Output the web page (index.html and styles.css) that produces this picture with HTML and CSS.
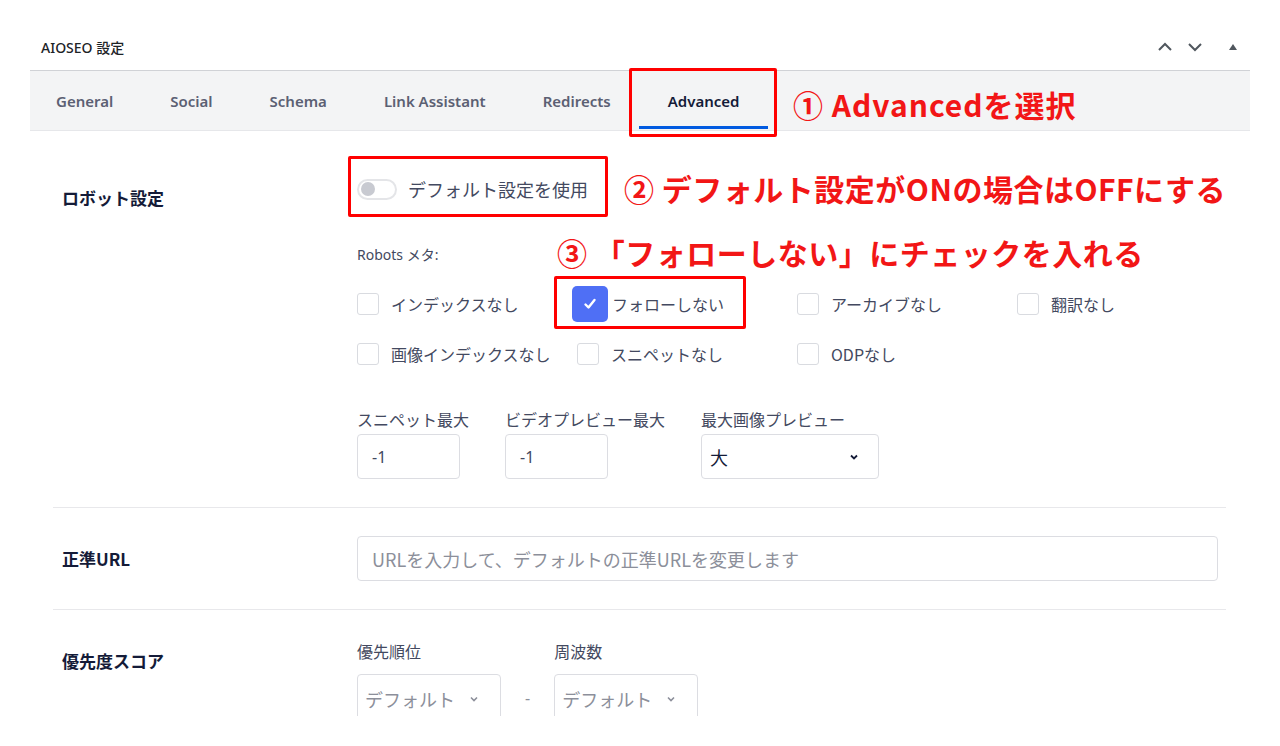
FILE: index.html
```html
<!DOCTYPE html>
<html lang="ja">
<head>
<meta charset="utf-8">
<title>AIOSEO 設定</title>
<link rel="stylesheet" href="styles.css">
</head>
<body>
<div class="page">
  <div class="postbox">
    <div class="postbox-header">
      <h2 class="postbox-title">AIOSEO 設定</h2>
      <div class="handle-actions">
        <svg class="hicon" width="16" height="16" viewBox="0 0 16 16"><path d="M2 11 L8 5 L14 11" fill="none" stroke="#50575e" stroke-width="2"/></svg>
        <svg class="hicon" width="16" height="16" viewBox="0 0 16 16"><path d="M2 5 L8 11 L14 5" fill="none" stroke="#50575e" stroke-width="2"/></svg>
        <svg class="hicon tri" width="10" height="10" viewBox="0 0 10 10"><path d="M1 8 L5 2 L9 8 Z" fill="#50575e"/></svg>
      </div>
    </div>
    <div class="tabs">
      <div class="tab">General</div>
      <div class="tab">Social</div>
      <div class="tab">Schema</div>
      <div class="tab">Link Assistant</div>
      <div class="tab">Redirects</div>
      <div class="tab active">Advanced</div>
    </div>
    <div class="content">
      <div class="setting-row row-robots">
        <div class="setting-label">ロボット設定</div>
        <div class="setting-field">
          <div class="toggle-line">
            <span class="toggle"><span class="knob"></span></span>
            <span class="toggle-text">デフォルト設定を使用</span>
          </div>
          <div class="robots-label">Robots メタ:</div>
          <div class="checks">
            <label class="check"><span class="box"></span><span class="ctext">インデックスなし</span></label>
            <label class="check checked"><span class="box"><svg width="16" height="16" viewBox="0 0 16 16"><path d="M3.5 8.5 L6.5 11.5 L12.5 4" fill="none" stroke="#fff" stroke-width="2.4" stroke-linecap="round" stroke-linejoin="round"/></svg></span><span class="ctext">フォローしない</span></label>
            <label class="check"><span class="box"></span><span class="ctext">アーカイブなし</span></label>
            <label class="check"><span class="box"></span><span class="ctext">翻訳なし</span></label>
            <label class="check"><span class="box"></span><span class="ctext">画像インデックスなし</span></label>
            <label class="check"><span class="box"></span><span class="ctext">スニペットなし</span></label>
            <label class="check"><span class="box"></span><span class="ctext">ODPなし</span></label>
          </div>
          <div class="limits">
            <div class="limit">
              <div class="flabel">スニペット最大</div>
              <div class="input small">-1</div>
            </div>
            <div class="limit">
              <div class="flabel">ビデオプレビュー最大</div>
              <div class="input small">-1</div>
            </div>
            <div class="limit">
              <div class="flabel">最大画像プレビュー</div>
              <div class="input select wide"><span>大</span>
                <svg width="12" height="12" viewBox="0 0 12 12"><path d="M3 4.5 L6 7.5 L9 4.5" fill="none" stroke="#141b38" stroke-width="1.8"/></svg>
              </div>
            </div>
          </div>
        </div>
      </div>
      <div class="setting-row row-url">
        <div class="setting-label">正準URL</div>
        <div class="setting-field">
          <div class="input url"><span class="placeholder">URLを入力して、デフォルトの正準URLを変更します</span></div>
        </div>
      </div>
      <div class="setting-row row-priority">
        <div class="setting-label">優先度スコア</div>
        <div class="setting-field">
          <div class="prio">
            <div class="limit">
              <div class="flabel">優先順位</div>
              <div class="input select prio-select"><span class="placeholder">デフォルト</span>
                <svg width="12" height="12" viewBox="0 0 12 12"><path d="M3 4.5 L6 7.5 L9 4.5" fill="none" stroke="#8c8f9a" stroke-width="1.6"/></svg>
              </div>
            </div>
            <div class="dash">-</div>
            <div class="limit">
              <div class="flabel">周波数</div>
              <div class="input select prio-select"><span class="placeholder">デフォルト</span>
                <svg width="12" height="12" viewBox="0 0 12 12"><path d="M3 4.5 L6 7.5 L9 4.5" fill="none" stroke="#8c8f9a" stroke-width="1.6"/></svg>
              </div>
            </div>
          </div>
        </div>
      </div>
    </div>
  </div>

  <div class="anno-box box1"></div>
  <div class="anno-text text1">① Advancedを選択</div>
  <div class="anno-box box2"></div>
  <div class="anno-text text2">② デフォルト設定がONの場合はOFFにする</div>
  <div class="anno-text text3">③ 「フォローしない」にチェックを入れる</div>
  <div class="anno-box box3"></div>
</div>
</body>
</html>
```
FILE: styles.css
```css
* { box-sizing: border-box; }
html, body { margin: 0; padding: 0; background: #fff; }
body {
  font-family: "Noto Sans", "Noto Sans CJK JP", sans-serif;
  color: #434960;
}
.page {
  position: relative;
  width: 1280px;
  height: 716px;
  overflow: hidden;
}
.postbox {
  margin-left: 30px;
  width: 1220px;
}
.postbox-header {
  height: 70px;
  display: flex;
  align-items: center;
  justify-content: space-between;
  padding: 24px 12px 0 11px;
}
.postbox-title {
  margin: 0;
  font-size: 14px;
  font-weight: 500;
  color: #1d2327;
}
.handle-actions {
  display: flex;
  align-items: center;
  gap: 14px;
}
.handle-actions .tri { margin-left: 11px; }
.tabs {
  height: 61px;
  background: #f3f4f5;
  border-top: 1px solid #d0d2d6;
  border-bottom: 1px solid #e6e7ea;
  display: flex;
}
.tab {
  padding: 0 28.5px;
  display: flex;
  align-items: center;
  font-size: 15px;
  font-weight: 600;
  color: #5b6073;
  height: 100%;
  position: relative;
}
.tab:first-child { padding-left: 26px; }
.tab.active { color: #141b38; }
.tab.active::after {
  content: "";
  position: absolute;
  left: 0;
  right: 0;
  bottom: 1px;
  height: 3px;
  background: #005ae0;
}
.content {
  padding: 0 24px 0 23px;
}
.setting-row {
  display: grid;
  grid-template-columns: 304px 1fr;
  border-bottom: 1px solid #e8e8eb;
}
.setting-label {
  padding-left: 9px;
  font-size: 17px;
  font-weight: 700;
  color: #141b38;
  font-family: "Noto Sans CJK JP", sans-serif;
}
.row-robots { padding: 44px 0 28px; }
.row-robots .setting-label { padding-top: 10px; }
.toggle-line {
  display: flex;
  align-items: center;
  height: 28px;
  gap: 11px;
}
.toggle {
  width: 40px;
  height: 21px;
  border: 2px solid #e4e5e8;
  border-radius: 11px;
  background: #fff;
  display: flex;
  align-items: center;
  padding-left: 2px;
}
.knob {
  width: 14px;
  height: 14px;
  border-radius: 50%;
  background: #c8cad1;
}
.toggle-text {
  font-size: 18px;
  color: #434960;
  font-family: "Noto Sans CJK JP", sans-serif;
}
.robots-label {
  margin-top: 42px;
  font-size: 14px;
  line-height: 20px;
  color: #434960;
}
.checks {
  margin-top: 21px;
  display: grid;
  grid-template-columns: repeat(4, 220px);
  row-gap: 14px;
}
.check {
  display: flex;
  align-items: center;
  height: 36px;
  gap: 12px;
}
.box {
  width: 22px;
  height: 22px;
  border: 1.5px solid #d9dbe0;
  border-radius: 3px;
  background: #fff;
  display: flex;
  align-items: center;
  justify-content: center;
}
.check.checked { margin-left: -5px; gap: 4px; }
.check.checked .box {
  width: 36px;
  height: 36px;
  border: none;
  border-radius: 5px;
  background: #4f6ff5;
}
.ctext {
  font-size: 16px;
  color: #434960;
  font-family: "Noto Sans CJK JP", sans-serif;
}
.limits {
  margin-top: 36px;
  display: flex;
  gap: 36px;
}
.flabel {
  font-size: 16px;
  line-height: 22px;
  color: #434960;
  font-family: "Noto Sans CJK JP", sans-serif;
  margin-bottom: 4px;
  white-space: nowrap;
}
.input {
  height: 45px;
  border: 1.5px solid #dcdde2;
  border-radius: 4px;
  background: #fff;
  display: flex;
  align-items: center;
  font-size: 16px;
  color: #434960;
}
.input.small {
  width: 103px;
  padding-left: 14px;
}
.input.select {
  justify-content: space-between;
  padding: 0 18px 0 8px;
}
.input.wide {
  width: 178px;
  font-size: 18px;
  color: #141b38;
  font-family: "Noto Sans CJK JP", sans-serif;
}
.row-url {
  padding: 28px 0 28px;
  align-items: center;
}
.input.url {
  width: 861px;
  height: 45px;
  padding-left: 14px;
}
.placeholder {
  color: #8c8f9a;
  font-size: 18px;
  font-family: "Noto Sans CJK JP", sans-serif;
}
.row-priority {
  padding: 30px 0 30px;
  border-bottom: none;
}
.row-priority .setting-label { padding-top: 8px; }
.prio {
  display: flex;
  gap: 20px;
}
.prio .flabel { margin-bottom: 12px; }
.input.prio-select {
  width: 144px;
  height: 50px;
  padding: 0 20px 0 7px;
}
.dash {
  align-self: flex-end;
  height: 50px;
  line-height: 48px;
  font-size: 16px;
  color: #8c8f9a;
  padding: 0 4px;
}

.anno-box {
  position: absolute;
  border: 3px solid #f00;
  border-radius: 2px;
}
.box1 { left: 629px; top: 68px; width: 148px; height: 69px; }
.box2 { left: 348px; top: 156px; width: 260px; height: 61px; }
.box3 { left: 554px; top: 276px; width: 192px; height: 53px; }
.anno-text {
  position: absolute;
  font-family: "Noto Sans CJK JP", sans-serif;
  font-weight: 700;
  font-size: 30px;
  line-height: 34px;
  letter-spacing: 0.5px;
  color: #f21616;
  white-space: pre;
}
.text1 { left: 793px; top: 87px; letter-spacing: 1px; }
.text2 { left: 624px; top: 171px; }
.text3 { left: 557px; top: 235px; }
```
